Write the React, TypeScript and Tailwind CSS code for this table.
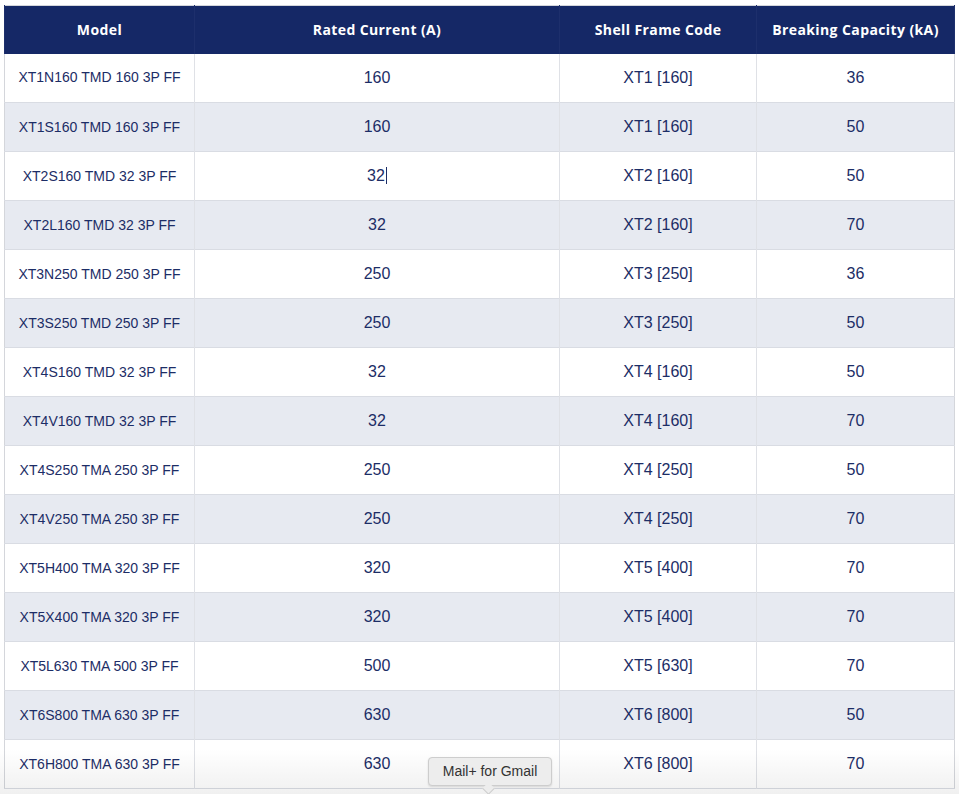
import React from 'react';

type Row = {
  model: string;
  current: string;
  frame: string;
  capacity: string;
};

const rows: Row[] = [
  { model: 'XT1N160 TMD 160 3P FF', current: '160', frame: 'XT1 [160]', capacity: '36' },
  { model: 'XT1S160 TMD 160 3P FF', current: '160', frame: 'XT1 [160]', capacity: '50' },
  { model: 'XT2S160 TMD 32 3P FF', current: '32', frame: 'XT2 [160]', capacity: '50' },
  { model: 'XT2L160 TMD 32 3P FF', current: '32', frame: 'XT2 [160]', capacity: '70' },
  { model: 'XT3N250 TMD 250 3P FF', current: '250', frame: 'XT3 [250]', capacity: '36' },
  { model: 'XT3S250 TMD 250 3P FF', current: '250', frame: 'XT3 [250]', capacity: '50' },
  { model: 'XT4S160 TMD 32 3P FF', current: '32', frame: 'XT4 [160]', capacity: '50' },
  { model: 'XT4V160 TMD 32 3P FF', current: '32', frame: 'XT4 [160]', capacity: '70' },
  { model: 'XT4S250 TMA 250 3P FF', current: '250', frame: 'XT4 [250]', capacity: '50' },
  { model: 'XT4V250 TMA 250 3P FF', current: '250', frame: 'XT4 [250]', capacity: '70' },
  { model: 'XT5H400 TMA 320 3P FF', current: '320', frame: 'XT5 [400]', capacity: '70' },
  { model: 'XT5X400 TMA 320 3P FF', current: '320', frame: 'XT5 [400]', capacity: '70' },
  { model: 'XT5L630 TMA 500 3P FF', current: '500', frame: 'XT5 [630]', capacity: '70' },
  { model: 'XT6S800 TMA 630 3P FF', current: '630', frame: 'XT6 [800]', capacity: '50' },
  { model: 'XT6H800 TMA 630 3P FF', current: '630', frame: 'XT6 [800]', capacity: '70' },
];

const headers = ['Model', 'Rated Current (A)', 'Shell Frame Code', 'Breaking Capacity (kA)'];

export default function App() {
  return (
    <div className="relative h-[794px] w-[959px] overflow-hidden bg-white">
      <div className="pl-[4px] pt-[5px]">
        <table className="w-[950px] table-fixed border-collapse border border-[#d4d6db] font-['Liberation_Sans',Arial,sans-serif] text-[#1c2d66]">
          <colgroup>
            <col className="w-[190px]" />
            <col className="w-[365px]" />
            <col className="w-[197px]" />
            <col className="w-[198px]" />
          </colgroup>
          <thead>
            <tr className="h-[48px] bg-[#152866]">
              {headers.map((h) => (
                <th
                  key={h}
                  className="border-x border-[#1d2f6c] px-1 text-center font-['Open_Sans',sans-serif] text-[14px] font-bold tracking-[0.4px] text-white"
                >
                  {h}
                </th>
              ))}
            </tr>
          </thead>
          <tbody>
            {rows.map((r, i) => (
              <tr
                key={r.model}
                className={
                  'h-[49px] border-b border-[#d9dce3] ' +
                  (i % 2 === 1 ? 'bg-[#e7eaf1]' : 'bg-white')
                }
              >
                <td className="border-r border-[#dfe1e6] text-center text-[14px]">{r.model}</td>
                <td className="border-r border-[#dfe1e6] text-center text-[16px]">
                  {r.current}
                  {i === 2 && (
                    <span className="ml-px inline-block h-[17px] w-px translate-y-[3px] bg-[#1c2d66]" />
                  )}
                </td>
                <td className="border-r border-[#dfe1e6] text-center text-[16px]">{r.frame}</td>
                <td className="text-center text-[16px]">{r.capacity}</td>
              </tr>
            ))}
          </tbody>
        </table>
      </div>

      {/* bottom fade from the browser chrome */}
      <div className="pointer-events-none absolute bottom-0 left-0 h-[45px] w-full bg-gradient-to-b from-transparent to-[rgba(0,0,0,0.06)]" />

      {/* tooltip */}
      <div className="absolute left-[428px] top-[757px]">
        <div className="flex h-[29px] w-[124px] items-center justify-center rounded-[4px] border border-[#cdcdcd] bg-[#ededed] font-['Liberation_Sans',Arial,sans-serif] text-[14px] text-[#333] shadow-[0_1px_2px_rgba(0,0,0,0.12)]">
          Mail+ for Gmail
        </div>
        <div className="absolute left-[56px] top-[27px] h-[9px] w-[9px] rotate-45 border-b border-r border-[#cdcdcd] bg-[#ededed]" />
      </div>
    </div>
  );
}
